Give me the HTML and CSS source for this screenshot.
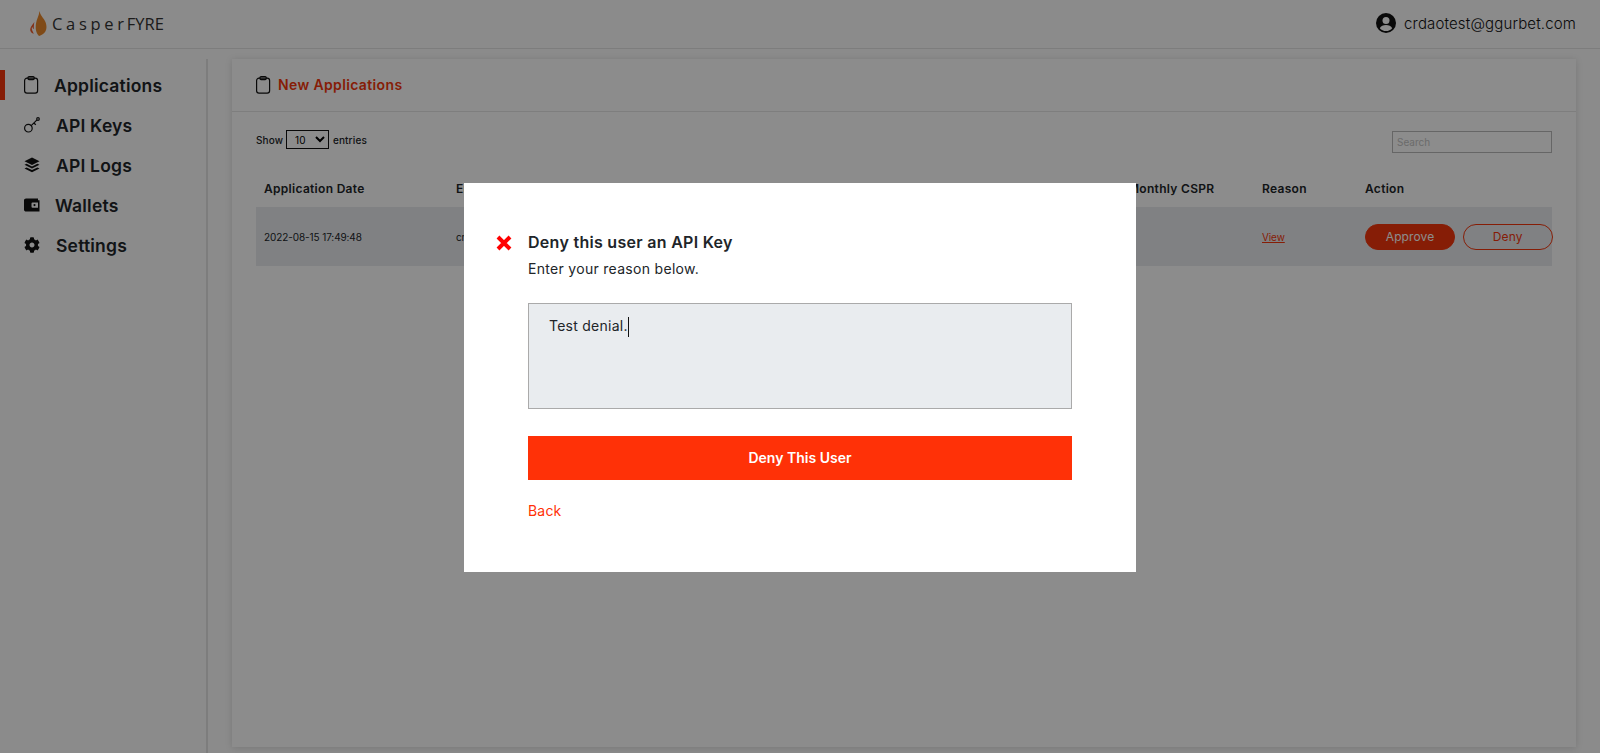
FILE: index.html
```html
<!DOCTYPE html>
<html lang="en">
<head>
  <meta charset="UTF-8" />
  <meta name="viewport" content="width=device-width, initial-scale=1.0" />
  <title>CasperFYRE Admin</title>
  <link rel="stylesheet" href="styles.css">
</head>
<body>

  <header class="topbar">
    <a class="logo" href="#">
      <svg class="logo-flame" viewBox="0 0 18 25" width="18" height="25">
        <path fill="#e8872a" d="M10.500 0c.6 3.600 2.600 5.600 4.600 8.600 2.400 3.600 3.200 8 1.400 11.600-1.400 2.400-4 3.900-6.400 4.800-1.400-1-2.800-3.200-3.200-6.200-.3-2.600-.2-4.800.2-6.800.5-3.500 2.900-7 3.400-12z"/>
        <path fill="#ef5a2a" d="M5.300 9.500c.3 1.800-.8 2.800-2.100 4.500-1.500 2-2.400 4-1.800 6 .5 1.200 1.600 2.200 3.200 2.900-.3-1.600-1.100-2.700-1.500-3.900-.4-1.100-.4-2.300.1-3.300.3 1.300.9 1.800 1.700 2.400-.4-2.900.5-5.800.4-8.600z"/>
      </svg>
      <span class="logo-text">Casper<span class="logo-fyre">FYRE</span></span>
    </a>
    <div class="account">
      <svg viewBox="0 0 20 20" width="20" height="20">
        <circle cx="10" cy="10" r="10" fill="#111"/>
        <circle cx="10" cy="7.600" r="3.500" fill="#fff"/>
        <path fill="#fff" d="M3.800 15.200c1.100-2.300 3.400-3.300 6.200-3.300s5.100 1 6.200 3.300c-1.500 1.800-3.700 2.900-6.200 2.900s-4.700-1.100-6.200-2.900z"/>
      </svg>
      <span>crdaotest@ggurbet.com</span>
    </div>
  </header>

  <div class="layout">
    <nav class="sidebar">
      <a class="nav-item active" href="#">
        <svg class="nav-icon" viewBox="0 0 16 18" width="16" height="18" fill="none" stroke="#111" stroke-width="1.200">
          <rect x=".6" y="2.200" width="13" height="15" rx="2.400"/>
          <rect x="4" y=".6" width="6.200" height="3" rx="1"/>
        </svg>
        <span class="nav-label pull">Applications</span>
      </a>
      <a class="nav-item" href="#">
        <svg class="nav-icon" viewBox="0 0 16 16" width="16" height="16" fill="none" stroke="#111" stroke-width="1.200">
          <circle cx="4.400" cy="11.200" r="3.800"/>
          <path d="M7.200 8.600l5.800-5.800M9.800 6l2 1.800"/>
          <circle cx="14" cy="2" r="1.300"/>
        </svg>
        <span class="nav-label nudge">API Keys</span>
      </a>
      <a class="nav-item" href="#">
        <svg class="nav-icon" viewBox="0 0 16 16" width="16" height="16" fill="#111">
          <path d="M8 .5l7.500 3.700L8 8 .5 4.200z"/>
          <path d="M2.600 6.700L8 9.400l5.400-2.700 2.100 1.100L8 11.600.5 7.800z"/>
          <path d="M2.600 10.400L8 13.100l5.400-2.700 2.100 1.100L8 15.300.5 11.500z"/>
        </svg>
        <span class="nav-label nudge">API Logs</span>
      </a>
      <a class="nav-item" href="#">
        <svg class="nav-icon" viewBox="0 0 16 16" width="16" height="16">
          <path fill="#111" fill-rule="evenodd" d="M2 1.500h12v1.800h1.500v11.200H2c-1 0-2-.8-2-1.800V3.300c0-1 1-1.800 2-1.800zM8.500 5.500a1 1 0 00-1 1v3.200a1 1 0 001 1h5.500V5.500zm2 1.500a1.100 1.100 0 110 2.200 1.100 1.100 0 010-2.200z"/>
        </svg>
        <span class="nav-label">Wallets</span>
      </a>
      <a class="nav-item" href="#">
        <svg class="nav-icon" viewBox="0 0 512 512" width="16" height="16">
          <path fill="#111" d="M487.4 315.7l-42.6-24.6c4.3-23.2 4.3-47 0-70.2l42.6-24.6c4.9-2.8 7.1-8.6 5.5-14-11.1-35.6-30-67.8-54.7-94.6-3.8-4.1-10-5.1-14.8-2.3L380.8 110c-17.9-15.4-38.5-27.3-60.8-35.1V25.8c0-5.6-3.9-10.5-9.4-11.7-36.7-8.2-74.3-7.8-109.2 0-5.5 1.2-9.4 6.1-9.4 11.7V75c-22.2 7.9-42.8 19.8-60.8 35.1L88.700 85.500c-4.900-2.800-11-1.900-14.800 2.300-24.700 26.700-43.600 58.900-54.700 94.600-1.700 5.400.6 11.200 5.500 14L67.300 221c-4.300 23.200-4.300 47 0 70.200l-42.600 24.600c-4.900 2.800-7.100 8.600-5.500 14 11.100 35.600 30 67.800 54.700 94.600 3.800 4.100 10 5.100 14.800 2.300l42.600-24.600c17.900 15.400 38.500 27.300 60.800 35.100v49.200c0 5.600 3.900 10.500 9.400 11.700 36.700 8.200 74.300 7.800 109.200 0 5.500-1.200 9.400-6.100 9.400-11.700v-49.200c22.200-7.900 42.800-19.800 60.800-35.100l42.600 24.600c4.900 2.800 11 1.900 14.800-2.300 24.700-26.700 43.600-58.900 54.700-94.600 1.500-5.500-.7-11.300-5.600-14.100zM256 336c-44.100 0-80-35.900-80-80s35.900-80 80-80 80 35.900 80 80-35.900 80-80 80z"/>
        </svg>
        <span class="nav-label nudge">Settings</span>
      </a>
    </nav>

    <main class="card">
      <div class="card-head">
        <svg viewBox="0 0 16 18" width="16" height="18" fill="none" stroke="#111" stroke-width="1.200">
          <rect x=".6" y="2.200" width="13" height="15" rx="2.400"/>
          <rect x="4" y=".6" width="6.200" height="3" rx="1"/>
        </svg>
        <h2>New Applications</h2>
      </div>
      <div class="card-body">
        <div class="table-tools">
          <label class="entries">Show
            <select>
              <option>10</option>
              <option>25</option>
              <option>50</option>
            </select>
            entries</label>
          <input class="search" type="text" placeholder="Search">
        </div>
        <table class="apps">
          <colgroup>
            <col class="col-date"><col class="col-email"><col class="col-cspr"><col class="col-reason"><col class="col-action">
          </colgroup>
          <thead>
            <tr>
              <th>Application Date</th>
              <th>Email</th>
              <th>Monthly CSPR</th>
              <th>Reason</th>
              <th>Action</th>
            </tr>
          </thead>
          <tbody>
            <tr>
              <td>2022-08-15 17:49:48</td>
              <td>cr</td>
              <td></td>
              <td><a class="view-link" href="#">View</a></td>
              <td class="actions">
                <button class="btn-approve">Approve</button>
                <button class="btn-deny">Deny</button>
              </td>
            </tr>
          </tbody>
        </table>
      </div>
    </main>
  </div>

  <div class="backdrop">
    <div class="modal">
      <div class="modal-head">
        <svg class="modal-x" viewBox="0 0 16 16" width="16" height="16">
          <path fill="none" stroke="#f00" stroke-width="4" d="M2 2l12 12M14 2L2 14"/>
        </svg>
        <div>
          <h3>Deny this user an API Key</h3>
          <p>Enter your reason below.</p>
        </div>
      </div>
      <div class="reason">Test denial.<span class="caret"></span></div>
      <button class="btn-submit">Deny This User</button>
      <a class="back-link" href="#">Back</a>
    </div>
  </div>

</body>
</html>
```

FILE: styles.css
```css
* {
  box-sizing: border-box;
}

html, body {
  height: 100%;
}

body {
  margin: 0;
  font-family: 'Inter', 'Liberation Sans', sans-serif;
  background: #fdfdfd;
  color: #212529;
  overflow: hidden;
}

.topbar {
  height: 49px;
  display: flex;
  justify-content: space-between;
  align-items: center;
  padding: 0 24px 2px 29px;
  border-bottom: 1px solid #e4e4e4;
}

.logo {
  display: flex;
  align-items: center;
  gap: 5px;
  text-decoration: none;
}

.logo-text {
  font-family: 'Open Sans', sans-serif;
  font-size: 16.500px;
  letter-spacing: 3.700px;
  color: #333;
}

.logo-fyre {
  letter-spacing: 0;
  margin-left: -1px;
}

.account {
  display: flex;
  align-items: center;
  gap: 8px;
  font-size: 15px;
  font-weight: 300;
  letter-spacing: 0.150px;
  color: #111;
}

.layout {
  display: flex;
  padding-top: 10px;
}

.sidebar {
  width: 208px;
  height: 700px;
  flex-shrink: 0;
  padding-top: 11px;
  border-right: 2px solid #e4e4e4;
}

.nav-item {
  height: 30px;
  margin-bottom: 10px;
  padding-left: 24px;
  display: flex;
  align-items: center;
  gap: 15px;
  font-size: 17.500px;
  font-weight: 600;
  letter-spacing: 0.200px;
  color: #212529;
  text-decoration: none;
}

.nav-item.active {
  border-left: 5px solid #f4360c;
  padding-left: 19px;
}

.nav-label.nudge {
  margin-left: 1px;
}

.nav-label.pull {
  margin-left: -1px;
}

.card {
  width: 1344px;
  height: 688px;
  margin-left: 24px;
  background: #fff;
  box-shadow: 0 1px 7px rgba(0,0,0,0.14);
}

.card-head {
  height: 53px;
  padding: 0 24px 1px;
  display: flex;
  align-items: center;
  gap: 2px;
  border-bottom: 1px solid #e6e6e6;
}

.card-head svg {
  margin-right: 2px;
}

.card-head h2 {
  margin: 0 0 0 2px;
  font-size: 14px;
  font-weight: 600;
  letter-spacing: 0.360px;
  color: #f4360c;
}

.card-body {
  padding: 18px 24px;
}

.table-tools {
  display: flex;
  justify-content: space-between;
  align-items: flex-start;
}

.entries {
  font-size: 10px;
  font-weight: 500;
  letter-spacing: 0.150px;
  color: #212529;
}

.entries select {
  width: 43px;
  height: 19px;
  margin: 0 1px 0 0;
  padding: 0 0 0 4px;
  font-family: inherit;
  font-size: 10px;
  background-color: transparent;
  border: 1px solid #111;
  border-radius: 0;
}

.search {
  width: 160px;
  height: 22px;
  margin-top: 1px;
  padding: 0 4px;
  font-family: inherit;
  font-size: 10px;
  border: 1px solid #bbb;
  outline: none;
}

.search::placeholder {
  color: #c4c4c4;
}

.apps {
  width: 1296px;
  margin-top: 16px;
  table-layout: fixed;
  border-collapse: collapse;
  font-size: 12px;
}

.col-date { width: 192px; }
.col-email { width: 672px; }
.col-cspr { width: 134px; }
.col-reason { width: 103px; }
.col-action { width: 195px; }

.apps th {
  height: 38px;
  padding: 0 8px;
  text-align: left;
  font-weight: 600;
  letter-spacing: 0.300px;
  color: #212529;
}

.apps td {
  height: 59px;
  padding: 0 8px;
  font-size: 10px;
  letter-spacing: -0.100px;
  background: #e9ecef;
  color: #212529;
}

.view-link {
  color: #f4360c;
}

.actions {
  white-space: nowrap;
}

.btn-approve, .btn-deny {
  width: 90px;
  height: 26px;
  padding: 0;
  font-family: inherit;
  font-size: 12px;
  letter-spacing: 0.100px;
  border-radius: 13px;
  border: 1px solid #f4360c;
  cursor: pointer;
}

.btn-approve {
  background: #f4360c;
  color: #fff;
}

.btn-deny {
  margin-left: 5px;
  background: transparent;
  color: #f4360c;
}

.backdrop {
  position: fixed;
  inset: 0;
  display: flex;
  justify-content: center;
  align-items: flex-start;
  padding-top: 183px;
  background: rgba(0,0,0,0.45);
}

.modal {
  width: 672px;
  height: 389px;
  padding: 50px 64px 0 32px;
  background: #fff;
  display: flex;
  flex-direction: column;
}

.modal-head {
  display: flex;
  gap: 16px;
}

.modal-x {
  margin-top: 2px;
  flex-shrink: 0;
}

.modal-head h3 {
  margin: 0;
  font-size: 16px;
  font-weight: 600;
  line-height: 18px;
  letter-spacing: 0.290px;
  color: #212529;
}

.modal-head p {
  margin: 8px 0 0;
  font-size: 14px;
  line-height: 20px;
  letter-spacing: 0.300px;
  color: #212529;
}

.reason, .btn-submit, .back-link {
  margin-left: 32px;
}

.reason {
  height: 106px;
  margin-top: 24px;
  padding: 12px 20px;
  font-size: 14px;
  line-height: 20px;
  letter-spacing: 0.250px;
  background: #e9ecef;
  border: 1px solid #aaa;
  color: #212529;
}

.caret {
  display: inline-block;
  width: 1px;
  height: 20px;
  vertical-align: middle;
  background: #111;
}

.btn-submit {
  height: 44px;
  margin-top: 27px;
  padding-bottom: 2px;
  font-family: inherit;
  font-size: 14px;
  font-weight: 600;
  color: #fff;
  background: #ff3107;
  border: none;
  cursor: pointer;
}

.back-link {
  margin-top: 21px;
  font-size: 14px;
  line-height: 20px;
  letter-spacing: 0.200px;
  color: #ff3107;
  text-decoration: none;
}
```
